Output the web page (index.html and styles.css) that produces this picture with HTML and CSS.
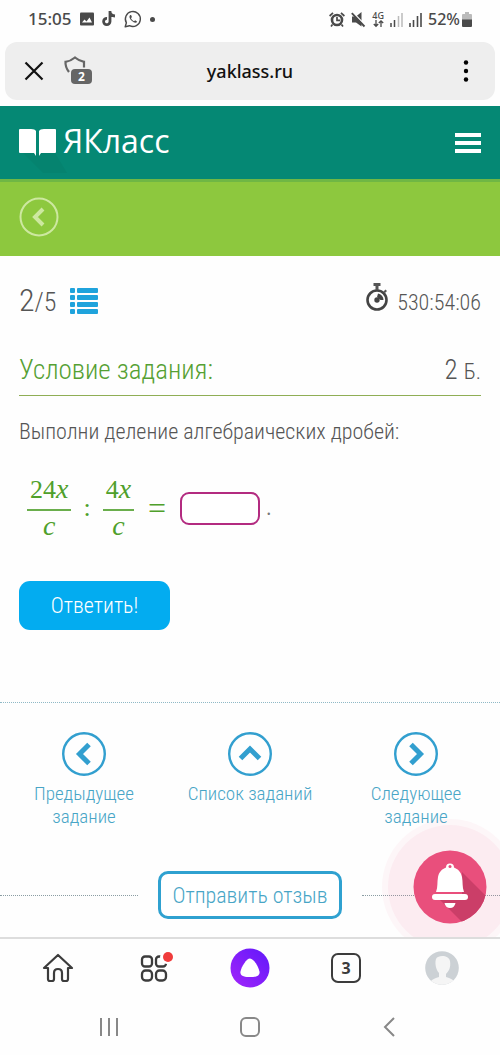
FILE: index.html
```
<!DOCTYPE html>
<html lang="ru">
<head>
<meta charset="utf-8">
<meta name="viewport" content="width=device-width, initial-scale=1">
<title>ЯКласс</title>
<link rel="stylesheet" href="styles.css">
</head>
<body>
<div class="status">
  <div class="status-group">
    <span class="clock">15:05</span>
    <svg width="14" height="14" viewBox="0 0 14 14"><rect width="14" height="13" y=".5" rx="1" fill="#4a4a4a"/><path d="M2 10.500l2.500-3 2 2 3-4 2.500 5z" fill="#fff"/></svg>
    <svg width="14" height="16" viewBox="0 0 14 16"><path d="M8 0v10.500a3.200 3.200 0 1 1-3-3.200M8 1c.5 2.600 2 3.800 5 4" fill="none" stroke="#4a4a4a" stroke-width="2.800"/></svg>
    <svg width="18" height="18" viewBox="0 0 18 18"><path d="M1.200 16.800l1.200-4A7.500 7.500 0 1 1 5.500 15.700z" fill="none" stroke="#4a4a4a" stroke-width="1.400" stroke-linejoin="round"/><path d="M6.300 5c-1.600 1.200-.9 3.600 1.400 5.800s4.600 2.600 5.500.9l-2-1.500-1.200 1C8.800 10.700 7.600 9.500 7 8.200l.9-1.100L7.100 5z" fill="#4a4a4a"/></svg>
    <span class="dot"></span>
  </div>
  <div class="status-group right">
    <svg width="16" height="15" viewBox="0 0 16 15"><circle cx="8" cy="8" r="5" fill="none" stroke="#4a4a4a" stroke-width="2.600"/><path d="M8 5v3.400h3M.6 4L4 .9M15.400 4L12 .9M3.500 12.500L2 14.500M12.500 12.500l1.500 2" fill="none" stroke="#4a4a4a" stroke-width="1.700"/></svg>
    <svg width="15" height="15" viewBox="0 0 15 15"><path d="M1 4.500h4l5.500-4.500v14.500L5 10.500H1z" fill="#4a4a4a"/><path d="M2.500 1l12 12.500" stroke="#fff" stroke-width="1.500"/><path d="M.8 1.200l12.700 13.300" stroke="#4a4a4a" stroke-width="1.900"/></svg>
    <span class="net">4G<svg width="11" height="7" viewBox="0 0 11 7"><path d="M3 0v6M.8 4L3 6.300 5.200 4M8 7V1M5.800 3L8 .8 10.200 3" fill="none" stroke="#4a4a4a" stroke-width="1.300"/></svg></span>
    <svg width="13" height="15" viewBox="0 0 13 15"><path d="M1 15v-4M4.500 15V8" stroke="#4a4a4a" stroke-width="1.500"/><path d="M8.500 15V4M12 15V1" stroke="#bbb" stroke-width="1.500"/></svg>
    <svg width="13" height="15" viewBox="0 0 13 15"><path d="M1 15v-4M4.500 15V8M8.500 15V4M12 15V1" stroke="#4a4a4a" stroke-width="1.600"/></svg>
    <span class="battery">52%<svg width="10" height="15" viewBox="0 0 10 15"><path d="M0 3q0-1 1-1h2V0h4v2h2q1 0 1 1v5H0z" fill="#bbb"/><path d="M0 7.500h10V14q0 1-1 1H1q-1 0-1-1z" fill="#4a4a4a"/></svg></span>
  </div>
</div>

<div class="address">
  <div class="address-left">
    <button class="icon-btn" aria-label="Закрыть"><svg width="20" height="20" viewBox="0 0 20 20"><path d="M1.500 1.500l17 17M18.500 1.500l-17 17" stroke="#111" stroke-width="2.200"/></svg></button>
    <button class="icon-btn shield" aria-label="Защита: 2"><svg width="28" height="30" viewBox="0 0 28 30"><path d="M5 16C2 12 1.200 9.500 1.500 5.800 5 5.400 8 4 11 1.500c3 2.500 5.500 3.800 9 4.300v5.700" fill="none" stroke="#666" stroke-width="2.200"/></svg><span class="shield-count">2</span></button>
  </div>
  <span class="url">yaklass.ru</span>
  <button class="icon-btn more" aria-label="Меню браузера"><svg width="6" height="22" viewBox="0 0 6 22"><circle cx="3" cy="2.500" r="2.200"/><circle cx="3" cy="11" r="2.200"/><circle cx="3" cy="19.500" r="2.200"/></svg></button>
</div>

<header class="site-header">
  <a class="logo" href="#" aria-label="ЯКласс">
    <svg width="37" height="28" viewBox="0 0 37 28"><path d="M4 24h32l12 20H24z" fill="#05836f"/><path d="M0 1q0-1 1-1h11q4 0 5 2v25l-2-3H1q-1 0-1-1z" fill="#fff"/><path d="M37 1q0-1-1-1H25q-4 0-5 2v25l2-3h14q1 0 1-1z" fill="#fff"/></svg>
    <span>ЯКласс</span>
  </a>
  <button class="icon-btn" aria-label="Меню"><svg width="26" height="20" viewBox="0 0 26 20"><path d="M0 2h26M0 10h26M0 18h26" stroke="#fff" stroke-width="3.800"/></svg></button>
</header>
<div class="back-bar">
  <a href="#" aria-label="Назад"><svg width="40" height="40" viewBox="0 0 40 40"><circle cx="20" cy="20" r="18.500" fill="none" stroke="#cde8a0" stroke-width="2"/><path d="M24 12l-8 8 8 8" fill="none" stroke="#cde8a0" stroke-width="4"/></svg></a>
</div>

<main class="task">
  <div class="progress">
    <div class="step"><span><span class="step-now">2</span>/5</span>
      <a href="#" aria-label="Список"><svg width="28" height="26" viewBox="0 0 28 26"><g fill="#1fa3dc"><rect width="5" height="5" rx="1"/><rect x="7" width="21" height="5" rx="1"/><rect y="7" width="5" height="5" rx="1"/><rect x="7" y="7" width="21" height="5" rx="1"/><rect y="14" width="5" height="5" rx="1"/><rect x="7" y="14" width="21" height="5" rx="1"/><rect y="21" width="5" height="5" rx="1"/><rect x="7" y="21" width="21" height="5" rx="1"/></g></svg></a>
    </div>
    <div class="timer"><svg width="24" height="28" viewBox="0 0 24 28"><circle cx="12" cy="17" r="9.500" fill="none" stroke="#444" stroke-width="2.600"/><path d="M8.500 0h7v3h-7zM10.500 3h3v4h-3zM18.500 8.500l2-2 1.500 1.500-2 2z" fill="#555"/><circle cx="12" cy="17" r="2.700" fill="#444"/><path d="M13 10.500a6.500 6.500 0 0 1 5.500 6.500h-3l-3.500-3z" fill="#444"/></svg><span>530:54:06</span></div>
  </div>
  <div class="heading">
    <h1>Условие задания:</h1>
    <span class="points">2 <small>Б.</small></span>
  </div>
  <p class="question">Выполни деление алгебраических дробей:</p>
  <div class="equation">
    <span class="fraction"><span>24<i>x</i></span><span class="den"><i>c</i></span></span>
    <span class="op">:</span>
    <span class="fraction"><span>4<i>x</i></span><span class="den"><i>c</i></span></span>
    <span class="op eq">=</span>
    <input class="answer" type="text" aria-label="Ответ">
    <span class="period">.</span>
  </div>
  <button class="submit">Ответить!</button>
</main>

<nav class="task-nav">
  <a href="#"><svg width="44" height="44" viewBox="0 0 44 44"><circle cx="22" cy="22" r="20.800"/><path class="arrow" d="M27 12.500L17.500 22l9.500 9.500"/></svg>Предыдущее задание</a>
  <a href="#"><svg width="44" height="44" viewBox="0 0 44 44"><circle cx="22" cy="22" r="20.800"/><path class="arrow" d="M12.500 26.500L22 17l9.500 9.500"/></svg>Список заданий</a>
  <a href="#"><svg width="44" height="44" viewBox="0 0 44 44"><circle cx="22" cy="22" r="20.800"/><path class="arrow" d="M17 12.500l9.500 9.500-9.500 9.500"/></svg>Следующее задание</a>
</nav>
<section class="feedback">
  <button class="feedback-btn">Отправить отзыв</button>
  <button class="bell" aria-label="Уведомления"><svg width="136" height="136" viewBox="0 0 136 136">
    <defs><clipPath id="disc"><circle cx="68" cy="68" r="36.500"/></clipPath></defs>
    <circle cx="68" cy="68" r="68" fill="#f05a80" fill-opacity=".05"/><circle cx="68" cy="68" r="62" fill="#f05a80" fill-opacity=".06"/>
    <circle cx="68" cy="68" r="36.500" fill="#e94f7c"/>
    <path d="M80 53l40 40-20 30-42-42 22-1z" fill="#cb3e68" clip-path="url(#disc)"/>
    <path d="M54 73c2-5 1-10 2-15 1-5 4-8 8-9.500a4 4 0 1 1 8 0c4 1.500 7 4.500 8 9.500 1 5 0 10 2 15z" fill="#fff"/><circle cx="68" cy="47.500" r="1.500" fill="#e94f7c"/>
    <rect x="50" y="75" width="36" height="6" rx="3" fill="#fff"/><path d="M62.500 84h11q-1 5-5.500 5t-5.500-5z" fill="#fff"/>
  </svg></button>
</section>

<nav class="browser-nav">
  <a href="#" aria-label="Домой"><svg width="32" height="30" viewBox="0 0 32 30"><path d="M6 15H2L16 2l14 13h-4v11q0 2-2 2h-2q-2 0-2-2v-6q0-4-4-4t-4 4v6q0 2-2 2H8q-2 0-2-2z" fill="none" stroke="#3c3c3c" stroke-width="2.200" stroke-linejoin="round"/></svg></a>
  <a href="#" aria-label="Сервисы"><svg width="34" height="34" viewBox="0 0 34 34"><g fill="none" stroke="#3c3c3c" stroke-width="2.300"><rect x="5" y="5.500" width="10" height="10" rx="3"/><rect x="19" y="5.500" width="10" height="10" rx="3"/><rect x="5" y="19.500" width="10" height="10" rx="3.500"/><rect x="19" y="19.500" width="10" height="10" rx="3.500"/></g><circle cx="30" cy="6" r="7" fill="#fff"/><circle cx="31" cy="6" r="5" fill="#f03c3c"/></svg></a>
  <a href="#" aria-label="Алиса"><svg width="40" height="40" viewBox="0 0 40 40"><defs><linearGradient id="violet" x1="1" y1="0" x2="0" y2="1"><stop stop-color="#6018fa"/><stop offset="1" stop-color="#a325fa"/></linearGradient></defs><circle cx="20" cy="20" r="19.500" fill="url(#violet)"/><path d="M20 10.500c3.500 0 8.500 8 9.500 13 .8 5-5 5.500-9.500 5.500s-10.300-.5-9.500-5.500c1-5 6-13 9.500-13z" fill="#fff"/></svg></a>
  <a class="tabs" href="#" aria-label="Вкладки: 3">3</a>
  <a href="#" aria-label="Профиль"><svg width="34" height="34" viewBox="0 0 34 34"><defs><clipPath id="avatar"><circle cx="17" cy="17" r="16.800"/></clipPath></defs><g clip-path="url(#avatar)"><rect width="34" height="34" fill="#ccd1d5"/><path d="M4 34c1-5 6-7 10-8v-4c-4-4-5-15-1-16 4-2 11-1 12 4 1 6-1 10-4 13v3c4 1 9 3 10 8z" fill="#f5f5f5"/></g></svg></a>
</nav>
<div class="system-nav">
  <button class="icon-btn" aria-label="Недавние"><svg width="20" height="20" viewBox="0 0 20 20"><path d="M2 1v18M10 1v18M18 1v18"/></svg></button>
  <button class="icon-btn" aria-label="Главный экран"><svg width="20" height="20" viewBox="0 0 20 20"><rect x="1" y="1" width="18" height="18" rx="5"/></svg></button>
  <button class="icon-btn" aria-label="Назад"><svg width="20" height="20" viewBox="0 0 20 20"><path d="M13 1l-9 9 9 9"/></svg></button>
</div>
</body>
</html>
```
FILE: styles.css
```
* { box-sizing: border-box; }
body {
  margin: 0;
  overflow-x: hidden;
  background: #fefefe;
  color: #555;
  font-family: "Roboto Condensed", "Liberation Sans Narrow", Roboto, sans-serif;
  font-weight: 300;
}
svg { display: block; flex: none; overflow: visible; }
a { color: inherit; text-decoration: none; }
button { font: inherit; color: inherit; cursor: pointer; }
.icon-btn { padding: 0; border: 0; background: none; }

.status {
  display: flex;
  justify-content: space-between;
  align-items: center;
  height: 38px;
  padding: 0 28px;
  color: #4a4a4a;
  font: 500 17px/20px "Noto Sans", sans-serif;
}
.status-group { display: flex; align-items: center; gap: 8px; }
.right { gap: 6px; }
.dot { width: 5px; height: 5px; border-radius: 50%; background: #4a4a4a; }
.net { display: grid; justify-items: center; font-size: 9px; line-height: 9px; }
.battery { display: flex; align-items: center; gap: 2px; font-size: 16px; }

.address {
  display: grid;
  grid-template-columns: 1fr auto 1fr;
  align-items: center;
  height: 58px;
  margin: 4px 5px 6px;
  padding: 0 19px;
  border-radius: 12px;
  background: #eee;
}
.address-left { display: flex; align-items: center; gap: 20px; }
.url { color: #111; font: 500 18px/24px "Noto Sans", sans-serif; }
.more { justify-self: end; margin-right: 7px; }
.shield { position: relative; }
.shield-count {
  position: absolute;
  right: 0;
  bottom: 2px;
  width: 21px;
  border-radius: 4px;
  background: #666;
  color: #fff;
  font: 700 12px/15px "Noto Sans", sans-serif;
}

.site-header {
  display: flex;
  justify-content: space-between;
  align-items: center;
  height: 73px;
  padding: 0 19px;
  background: #058874;
}
.logo { display: flex; align-items: center; gap: 7px; color: #fff; font: 400 32px/36px "Open Sans", sans-serif; }
.logo span { padding-bottom: 4px; }
.back-bar { height: 77px; padding: 15px 19px; border-top: 3px solid #6fb744; background: #8dc83e; }

.task { padding: 27px 19px 72px; }
.progress { display: flex; justify-content: space-between; align-items: flex-start; height: 34px; }
.step { display: flex; align-items: center; gap: 14px; font-size: 26px; line-height: 34px; }
.step-now { font-size: 32px; }
.timer { display: flex; align-items: flex-start; gap: 8px; font-size: 22px; line-height: 40px; }
.heading {
  display: flex;
  justify-content: space-between;
  align-items: baseline;
  margin-top: 36px;
  padding-bottom: 6px;
  border-bottom: 1px solid #8fae55;
}
h1 { margin: 0; color: #55a033; font-size: 27px; font-weight: 300; line-height: 35px; }
.points { font-size: 27px; line-height: 35px; }
.points small { font-size: 22px; }
.question { margin: 22px 0 0; font-size: 22px; line-height: 28px; }
.equation {
  display: flex;
  align-items: center;
  margin-top: 30px;
  padding-left: 8px;
  color: #4fa02b;
  font: 400 26px/28px "Liberation Serif", serif;
}
.equation i { font-size: 28px; line-height: 20px; }
.fraction { display: grid; text-align: center; }
.fraction > span { padding: 0 3px 5px; }
.fraction > .den { padding: 2px 3px 0; border-top: 2px solid #6aae4c; line-height: 27px; }
.op { padding: 0 12px; }
.eq { padding: 0 14px; font-size: 32px; }
.answer { width: 80px; height: 33px; padding: 0 8px; border: 2px solid #b32b80; border-radius: 9px; background: #fff; }
.period { margin-left: 6px; color: #777; font-size: 20px; }
.submit {
  display: block;
  width: 151px;
  height: 49px;
  margin-top: 41px;
  border: 0;
  border-radius: 11px;
  background: #03acf0;
  color: #fff;
  font-size: 22px;
}

.task-nav {
  display: grid;
  grid-template-columns: repeat(3, 1fr);
  padding: 29px 1px 43px;
  border-top: 1px dotted #8fb9c6;
  color: #48a5c6;
  font-size: 19px;
  line-height: 23px;
  text-align: center;
}
.task-nav a { display: flex; flex-direction: column; align-items: center; gap: 6px; padding: 0 18px; }
.task-nav svg { fill: none; stroke: #329fcf; stroke-width: 2.4; }
.task-nav .arrow { stroke-width: 5; }

.feedback {
  position: relative;
  display: flex;
  align-items: center;
  gap: 20px;
  height: 66px;
  padding-bottom: 18px;
}
.feedback::before, .feedback::after { content: ""; flex: 1; border-top: 1px dotted #8a9da3; }
.feedback-btn {
  width: 184px;
  height: 48px;
  padding: 0;
  border: 3px solid #2fa1d0;
  border-radius: 10px;
  background: #fff;
  color: #48a5c6;
  font-size: 22px;
}
.bell {
  position: absolute;
  right: -18px;
  bottom: -18px;
  padding: 0;
  border: 0;
  background: none;
}

.browser-nav {
  position: relative;
  display: grid;
  grid-template-columns: repeat(5, 1fr);
  align-items: center;
  justify-items: center;
  height: 60px;
  padding: 0 10px;
  border-top: 2px solid #ddd;
  background: #fefefe;
}
.tabs {
  width: 30px;
  height: 30px;
  border: 2px solid #3c3c3c;
  border-radius: 7px;
  color: #3c3c3c;
  font: 700 16px/26px "Noto Sans", sans-serif;
  text-align: center;
}
.system-nav { display: flex; justify-content: space-around; padding: 20px 38px; }
.system-nav svg { fill: none; stroke: #888; stroke-width: 2; }
```
